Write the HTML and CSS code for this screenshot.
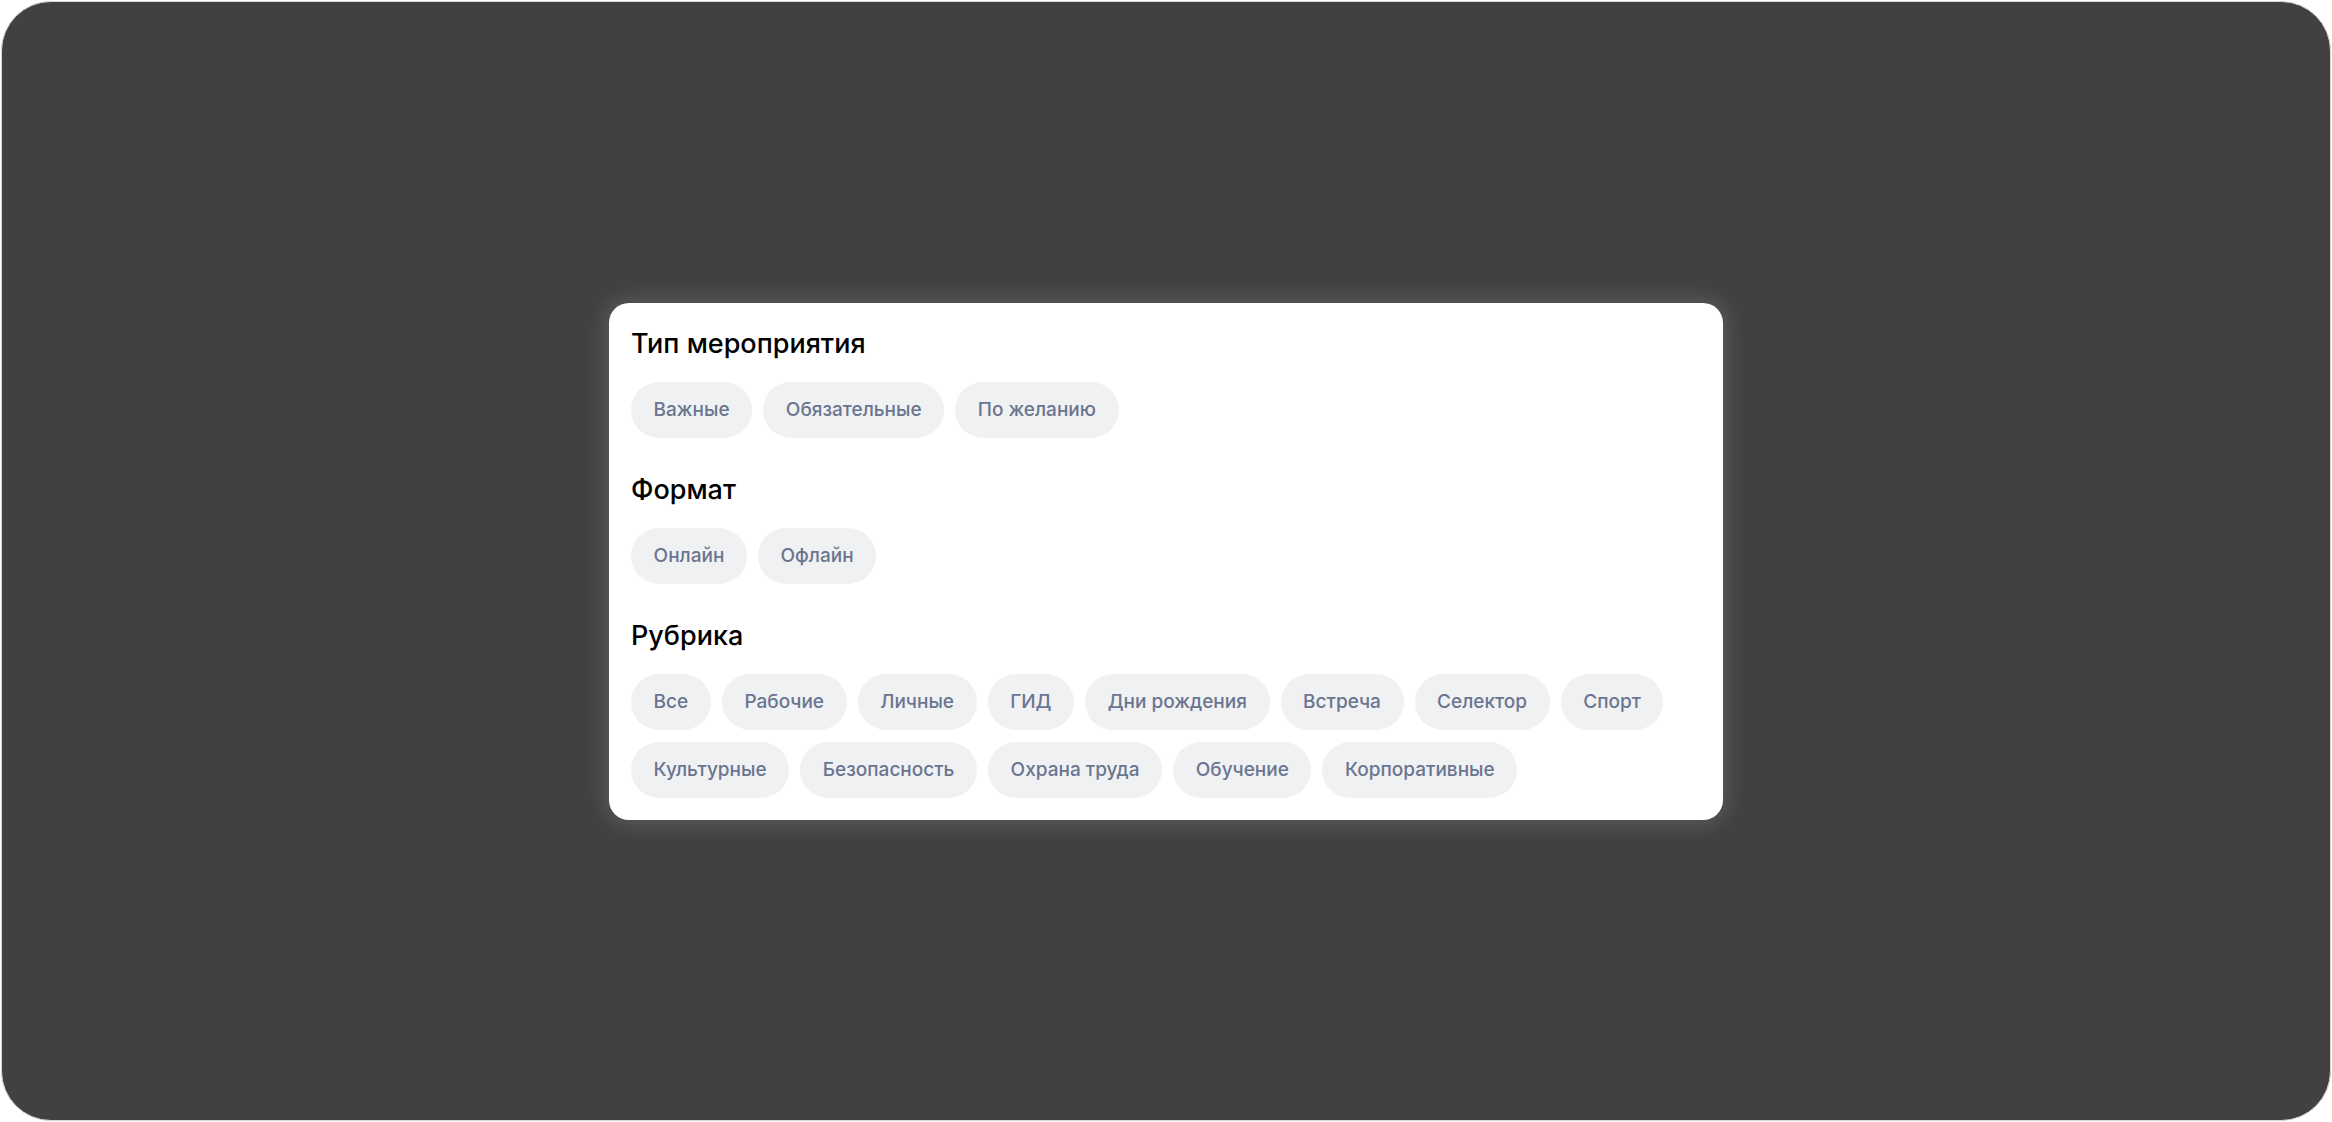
FILE: index.html
```html
<!DOCTYPE html>
<html lang="ru">
<head>
    <meta charset="UTF-8">
    <meta name="viewport" content="width=device-width, initial-scale=1.0">
    <title>Фильтры мероприятий</title>
    <link rel="stylesheet" href="styles.css">
</head>
<body>
    <div class="screen">
        <!-- панель фильтров -->
        <div class="filters">
            <section class="filter-group">
                <h2>Тип мероприятия</h2>
                <div class="chips">
                    <button class="chip">Важные</button>
                    <button class="chip">Обязательные</button>
                    <button class="chip">По желанию</button>
                </div>
            </section>

            <section class="filter-group">
                <h2>Формат</h2>
                <div class="chips">
                    <button class="chip">Онлайн</button>
                    <button class="chip">Офлайн</button>
                </div>
            </section>

            <section class="filter-group">
                <h2>Рубрика</h2>
                <div class="chips">
                    <button class="chip">Все</button>
                    <button class="chip">Рабочие</button>
                    <button class="chip">Личные</button>
                    <button class="chip">ГИД</button>
                    <button class="chip">Дни рождения</button>
                    <button class="chip">Встреча</button>
                    <button class="chip">Селектор</button>
                    <button class="chip">Спорт</button>
                    <button class="chip">Культурные</button>
                    <button class="chip">Безопасность</button>
                    <button class="chip">Охрана труда</button>
                    <button class="chip">Обучение</button>
                    <button class="chip">Корпоративные</button>
                </div>
            </section>
        </div>
    </div>
</body>
</html>
```

FILE: styles.css
```css
/* общий фон */
html,
body {
    margin: 0;
    height: 100%;
    background: #ffffff;
    font-family: Inter, "Noto Sans", "Liberation Sans", sans-serif;
}
.screen {
    box-sizing: border-box;
    height: calc(100% - 2px);
    margin: 1px;
    border: 1px solid #d6d6d6;
    border-radius: 50px;
    background: #414141;
    display: flex;
    align-items: center;
    justify-content: center;
}

/* карточка фильтров */
.filters {
    box-sizing: border-box;
    width: 1114px;
    padding: 23px 22px 22px;
    border-radius: 20px;
    background: #ffffff;
    box-shadow: 0 0 22px 2px rgba(150, 160, 158, 0.35);
    display: flex;
    flex-direction: column;
    gap: 34px;
}
.filter-group h2 {
    margin: 0 0 20px;
    font-size: 27px;
    line-height: 36px;
    font-weight: 500;
    color: #000000;
}
.chips {
    display: flex;
    flex-wrap: wrap;
    gap: 12px 11px;
}
.chip {
    height: 56px;
    padding: 0 22.6px;
    border: none;
    border-radius: 28px;
    background-color: #f0f1f3;
    color: #6a7590;
    font-family: inherit;
    font-size: 19px;
    font-weight: 500;
    cursor: pointer;
}
.chip:hover {
    background-color: #e6e8ec;
}
```
